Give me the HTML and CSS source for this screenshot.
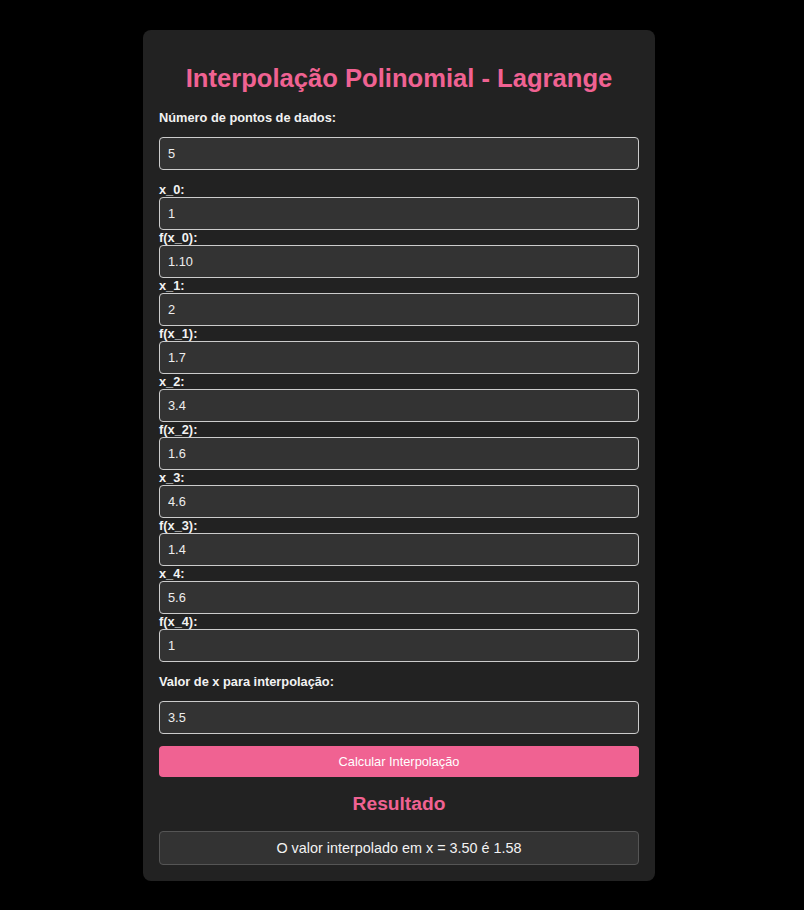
FILE: index.html
```html
<!DOCTYPE html>
<html lang="pt-BR">

<head>
  <meta charset="UTF-8" />
  <meta name="viewport" content="width=device-width, initial-scale=1.0" />
  <title>Interpolação Polinomial - Lagrange</title>
  <link rel="stylesheet" href="styles.css">
</head>

<body>
  <div class="container">
    <h1>Interpolação Polinomial - Lagrange</h1>

    <label class="field-label" for="numPoints">Número de pontos de dados:</label>
    <input type="number" id="numPoints" class="field-input" value="5" />

    <div id="points" class="points">
      <label>x_0:</label>
      <input type="text" class="x-input" value="1" />
      <label>f(x_0):</label>
      <input type="text" class="y-input" value="1.10" />
      <label>x_1:</label>
      <input type="text" class="x-input" value="2" />
      <label>f(x_1):</label>
      <input type="text" class="y-input" value="1.7" />
      <label>x_2:</label>
      <input type="text" class="x-input" value="3.4" />
      <label>f(x_2):</label>
      <input type="text" class="y-input" value="1.6" />
      <label>x_3:</label>
      <input type="text" class="x-input" value="4.6" />
      <label>f(x_3):</label>
      <input type="text" class="y-input" value="1.4" />
      <label>x_4:</label>
      <input type="text" class="x-input" value="5.6" />
      <label>f(x_4):</label>
      <input type="text" class="y-input" value="1" />
    </div>

    <label class="field-label" for="xValue">Valor de x para interpolação:</label>
    <input type="text" id="xValue" class="field-input" value="3.5" />

    <button id="calcBtn">Calcular Interpolação</button>

    <h2>Resultado</h2>
    <div id="result" class="result">O valor interpolado em x = 3.50 é 1.58</div>
  </div>

  <script>
    // Calcula o polinomio de Lagrange no ponto x
    document.getElementById("calcBtn").addEventListener("click", function () {
      const xs = Array.from(document.querySelectorAll(".x-input")).map((el) => parseFloat(el.value));
      const ys = Array.from(document.querySelectorAll(".y-input")).map((el) => parseFloat(el.value));
      const x = parseFloat(document.getElementById("xValue").value);
      let total = 0;
      for (let i = 0; i < xs.length; i++) {
        let term = ys[i];
        for (let j = 0; j < xs.length; j++) {
          if (i !== j) term *= (x - xs[j]) / (xs[i] - xs[j]);
        }
        total += term;
      }
      document.getElementById("result").textContent =
        "O valor interpolado em x = " + x.toFixed(2) + " é " + total.toFixed(2);
    });
  </script>
</body>

</html>
```

FILE: styles.css
```css
body {
  font-family: "Liberation Sans", Arial, sans-serif;
  font-size: 12.8px;
  background-color: #000;
  color: #fff;
  margin: 0;
  padding: 30px 6px 0 0;
}

/* Card principal */
.container {
  width: 480px;
  margin: 0 auto;
  padding: 16px;
  background-color: #222;
  border-radius: 8px;
}

h1 {
  font-size: 25.6px;
  color: #f06292;
  text-align: center;
  margin: 18px 0 17px;
}

h2 {
  font-size: 19.2px;
  color: #f06292;
  text-align: center;
  margin: 16px 0;
}

label {
  display: block;
  font-weight: bold;
  color: #f2f2f2;
}

.field-label {
  margin-bottom: 12px;
}

input {
  display: block;
  width: 100%;
  box-sizing: border-box;
  padding: 8px;
  font-family: inherit;
  font-size: 12.8px;
  color: #eee;
  background-color: #333;
  border: 1px solid #ccc;
  border-radius: 4px;
  outline: none;
}

.field-input {
  margin-bottom: 12px;
}

.points {
  margin-bottom: 12px;
}

/* Botao */
button {
  display: block;
  width: 100%;
  padding: 8px;
  font-family: inherit;
  font-size: 12.8px;
  color: #fff;
  background-color: #f06292;
  border: none;
  border-radius: 4px;
  cursor: pointer;
}

button:hover {
  background-color: #ec407a;
}

/* Resultado */
.result {
  padding: 8px;
  font-size: 14.4px;
  text-align: center;
  color: #f2f2f2;
  background-color: #333;
  border: 1px solid #555;
  border-radius: 4px;
}
```
